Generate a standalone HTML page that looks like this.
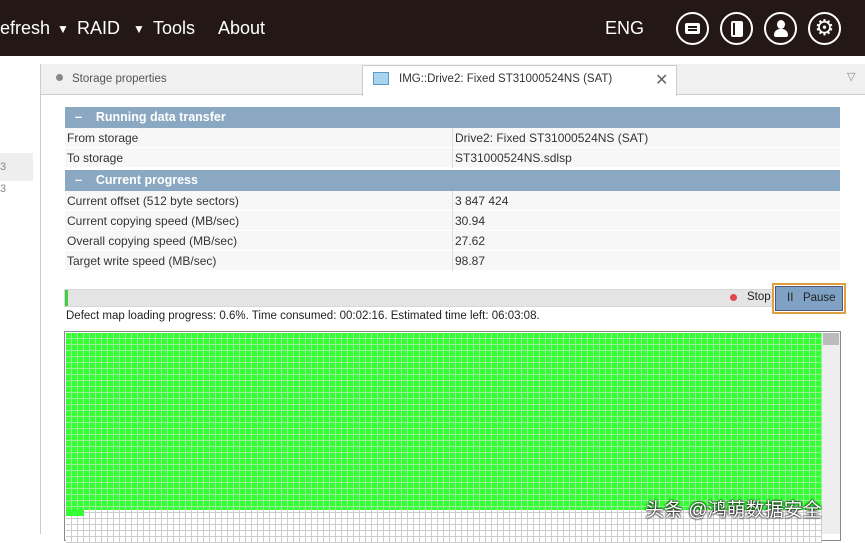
<!DOCTYPE html>
<html><head><style>
*{margin:0;padding:0;box-sizing:border-box}
body{width:865px;height:534px;overflow:hidden;background:#fff;font-family:"Liberation Sans",sans-serif;position:relative;font-size:12px;color:#222}
.top{position:absolute;left:0;top:0;width:865px;height:56px;background:#231815;color:#fff;font-size:18px}
.top span{position:absolute;top:18px}
.ic{position:absolute;top:12px;width:33px;height:33px;border:2px solid #fff;border-radius:50%}
.ic i{position:absolute;background:#fff}
.abs{position:absolute}
.hdr{position:absolute;left:65px;width:775px;height:21px;background:#8aa8c2;color:#fff;font-weight:bold;font-size:12.5px;line-height:21px;padding-left:10px}
.row{position:absolute;left:65px;width:775px;height:20px;background:#f7f7f7;border-bottom:1px solid #fff;line-height:20px;font-size:12px;color:#333}
.row b{font-weight:normal;position:absolute;left:2px}
.row em{font-style:normal;position:absolute;left:387px;border-left:1px solid #ddd;padding-left:2px;height:20px}
</style></head><body>
<div class="top">
<span style="left:0">efresh</span>
<span style="left:57px;font-size:12px;top:22px">▼</span><span style="left:77px">RAID</span>
<span style="left:133px;font-size:12px;top:22px">▼</span><span style="left:153px">Tools</span>
<span style="left:218px">About</span>
<span style="left:605px">ENG</span>
<div class="ic" style="left:676px"><i style="left:7px;top:9px;width:15px;height:11px;border-radius:2px"></i><i style="left:10px;top:12px;width:9px;height:1.5px;background:#231815"></i><i style="left:10px;top:15px;width:9px;height:1.5px;background:#231815"></i></div>
<div class="ic" style="left:720px"><i style="left:9px;top:7px;width:12px;height:16px;border-radius:2px"></i><i style="left:11px;top:9px;width:2px;height:12px;background:#231815"></i></div>
<div class="ic" style="left:764px"><i style="left:11px;top:6px;width:8px;height:9px;border-radius:50%"></i><i style="left:8px;top:15px;width:14px;height:8px;border-radius:6px 6px 2px 2px"></i></div>
<div class="ic" style="left:808px;font-size:22px;line-height:28px;text-align:center;color:#fff">⚙</div>
</div>
<div class="abs" style="left:0;top:56px;width:865px;height:8px;background:#fff"></div>
<div class="abs" style="left:40px;top:64px;width:1px;height:470px;background:#ccc"></div>
<div class="abs" style="left:0;top:153px;width:33px;height:28px;background:#eee"></div>
<div class="abs" style="left:0;top:161px;color:#888;font-size:11px">3</div>
<div class="abs" style="left:0;top:183px;color:#888;font-size:11px">3</div>
<div class="abs" style="left:41px;top:64px;width:824px;height:31px;background:#f0f0f0;border-bottom:1px solid #ccc"></div>
<div class="abs" style="left:56px;top:74px;width:7px;height:7px;border-radius:50%;background:#888"></div>
<div class="abs" style="left:72px;top:73px;font-size:11.5px;color:#555">Storage properties</div>
<div class="abs" style="left:362px;top:65px;width:315px;height:31px;background:#fff;border:1px solid #ccc;border-bottom:none"></div>
<div class="abs" style="left:373px;top:72px;width:16px;height:13px;background:#a9d3ee;border:1px solid #5b9bc8"></div>
<div class="abs" style="left:399px;top:73px;font-size:11.5px;color:#333">IMG::Drive2: Fixed ST31000524NS (SAT)</div>
<div class="abs" style="left:655px;top:70px;font-size:16px;color:#666">✕</div>
<div class="abs" style="left:847px;top:70px;font-size:11px;color:#888">▽</div>
<div class="hdr" style="top:107px">–&nbsp;&nbsp;&nbsp; Running data transfer</div>
<div class="row" style="top:128px"><b>From storage</b><em>Drive2: Fixed ST31000524NS (SAT)</em></div>
<div class="row" style="top:148px"><b>To storage</b><em>ST31000524NS.sdlsp</em></div>
<div class="hdr" style="top:170px">–&nbsp;&nbsp;&nbsp; Current progress</div>
<div class="row" style="top:191px"><b>Current offset (512 byte sectors)</b><em>3 847 424</em></div>
<div class="row" style="top:211px"><b>Current copying speed (MB/sec)</b><em>30.94</em></div>
<div class="row" style="top:231px"><b>Overall copying speed (MB/sec)</b><em>27.62</em></div>
<div class="row" style="top:251px"><b>Target write speed (MB/sec)</b><em>98.87</em></div>
<div class="abs" style="left:64px;top:289px;width:710px;height:18px;background:#e4e4e4;border:1px solid #d8d8d8"></div>
<div class="abs" style="left:65px;top:290px;width:3px;height:16px;background:#4c4"></div>
<div class="abs" style="left:730px;top:294px;width:7px;height:7px;border-radius:50%;background:#e04848"></div>
<div class="abs" style="left:747px;top:291px;font-size:11.5px">Stop</div>
<div class="abs" style="left:772px;top:283px;width:74px;height:31px;border:2px solid #e0a040"></div>
<div class="abs" style="left:775px;top:286px;width:68px;height:25px;background:#7fa2c4;border:1px solid #557;font-size:11.5px;line-height:23px;padding-left:11px">II&nbsp;&nbsp; Pause</div>
<div class="abs" style="left:66px;top:310px;font-size:11.5px">Defect map loading progress: 0.6%. Time consumed: 00:02:16. Estimated time left: 06:03:08.</div>
<div class="abs" style="left:64px;top:331px;width:777px;height:210px;border:1px solid #888;background:#fff"></div>
<div class="abs" style="left:66px;top:333px;width:756px;height:210px;background-color:#fff;background-image:linear-gradient(90deg,transparent 5px,#ccc 5px),linear-gradient(transparent 5px,#ccc 5px);background-size:6px 6px"></div>
<div class="abs" style="left:66px;top:333px;width:756px;height:177px;background-color:#3f3;background-image:linear-gradient(90deg,transparent 5px,#9e9 5px),linear-gradient(transparent 5px,#9e9 5px);background-size:6px 6px"></div>
<div class="abs" style="left:66px;top:510px;width:18px;height:6px;background:#3f3"></div>
<div class="abs" style="left:822px;top:333px;width:18px;height:201px;background:#eee"></div>
<div class="abs" style="left:823px;top:333px;width:16px;height:12px;background:#bbb"></div>
<div class="abs" style="left:645px;top:495px;font-size:19px;color:#fff;font-family:'Liberation Sans','Noto Sans CJK SC',sans-serif;text-shadow:0 0 2px #000,0 0 2px #000">头条 @鸿萌数据安全</div>
</body></html>
